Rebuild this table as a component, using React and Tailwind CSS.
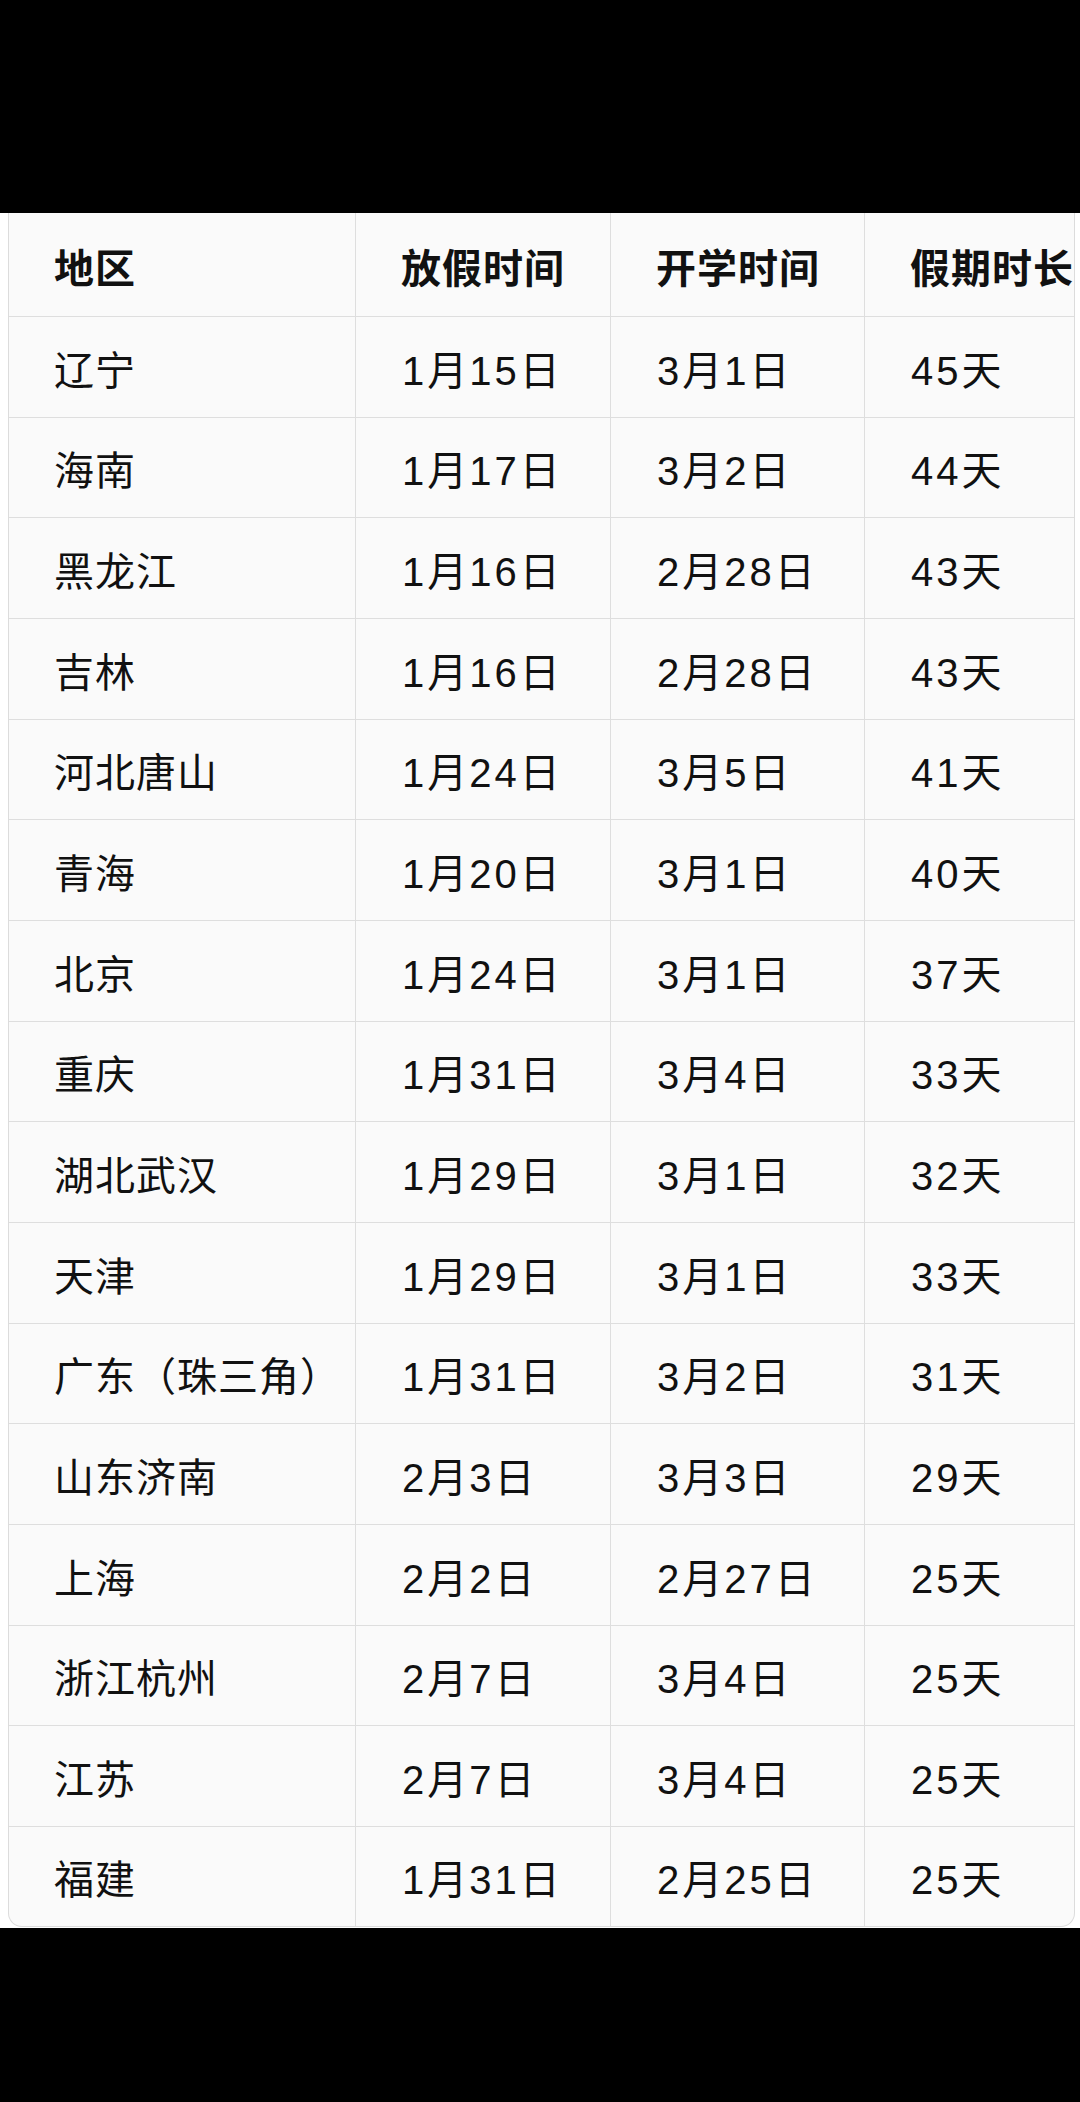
import React from "react";

const rows = [
  ["辽宁", "1月15日", "3月1日", "45天"],
  ["海南", "1月17日", "3月2日", "44天"],
  ["黑龙江", "1月16日", "2月28日", "43天"],
  ["吉林", "1月16日", "2月28日", "43天"],
  ["河北唐山", "1月24日", "3月5日", "41天"],
  ["青海", "1月20日", "3月1日", "40天"],
  ["北京", "1月24日", "3月1日", "37天"],
  ["重庆", "1月31日", "3月4日", "33天"],
  ["湖北武汉", "1月29日", "3月1日", "32天"],
  ["天津", "1月29日", "3月1日", "33天"],
  ["广东（珠三角）", "1月31日", "3月2日", "31天"],
  ["山东济南", "2月3日", "3月3日", "29天"],
  ["上海", "2月2日", "2月27日", "25天"],
  ["浙江杭州", "2月7日", "3月4日", "25天"],
  ["江苏", "2月7日", "3月4日", "25天"],
  ["福建", "1月31日", "2月25日", "25天"],
];

const font = {
  fontFamily: '"Liberation Sans", "Noto Sans CJK SC", sans-serif',
};

function Text({ s }) {
  const parts = s.split(/(\d+)/).filter((p) => p !== "");
  return (
    <>
      {parts.map((p, i) =>
        /^\d+$/.test(p) ? (
          <span key={i} className="tracking-[3px] ml-[1px]">
            {p}
          </span>
        ) : (
          <span key={i}>{p}</span>
        )
      )}
    </>
  );
}

function Cell({ children, last, bold }) {
  return (
    <div
      className={
        "flex items-center pl-[45px] pt-[8px] text-[40px] text-[#111111] tracking-[1px] whitespace-nowrap " +
        (last ? "" : "border-r border-[#dedede] ") +
        (bold ? "font-bold" : "font-normal")
      }
    >
      {children}
    </div>
  );
}

export default function App() {
  return (
    <div className="w-[1080px] h-[2102px] bg-black flex flex-col" style={font}>
      <div className="h-[213px] shrink-0 bg-black" />
      <div className="h-[1715px] shrink-0 bg-white pl-[8px] pr-[5px]">
        <div className="bg-[#fafafa] border-l border-r border-b border-[#dcdcdc] rounded-b-[14px] overflow-hidden">
          <div className="grid grid-cols-[347px_255px_254px_1fr] h-[104px] border-b border-[#dedede]">
            <Cell bold>地区</Cell>
            <Cell bold>放假时间</Cell>
            <Cell bold>开学时间</Cell>
            <Cell bold last>假期时长</Cell>
          </div>
          {rows.map((r, i) => (
            <div
              key={i}
              className={
                "grid grid-cols-[347px_255px_254px_1fr] " +
                (i === rows.length - 1 ? "h-[99px]" : "h-[100.67px] border-b border-[#dedede]")
              }
            >
              <Cell>{r[0]}</Cell>
              <Cell><Text s={r[1]} /></Cell>
              <Cell><Text s={r[2]} /></Cell>
              <Cell last><Text s={r[3]} /></Cell>
            </div>
          ))}
        </div>
      </div>
      <div className="flex-1 bg-black" />
    </div>
  );
}
